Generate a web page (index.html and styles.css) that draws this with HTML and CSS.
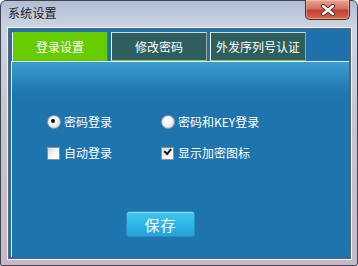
FILE: index.html
```html
<!DOCTYPE html>
<html lang="zh-CN">
<head>
  <meta charset="UTF-8">
  <title>系统设置</title>
  <link rel="stylesheet" href="styles.css">
</head>
<body>
  <div class="window">
    <!-- Barre de titre -->
    <div class="titlebar">
      <span class="title">系统设置</span>
      <button class="close" aria-label="关闭">
        <svg width="16" height="12" viewBox="0 0 16 12">
          <path d="M3 2 L13 10 M13 2 L3 10" stroke="#5a2a26" stroke-width="4.2" stroke-linecap="round"/>
          <path d="M3 2 L13 10 M13 2 L3 10" stroke="#ffffff" stroke-width="2.4" stroke-linecap="round"/>
        </svg>
      </button>
    </div>

    <div class="client">
      <div class="tabs">
        <div class="tab active">登录设置</div>
        <div class="tab">修改密码</div>
        <div class="tab">外发序列号认证</div>
      </div>

      <div class="panel">
        <div class="options">
          <label class="option"><span class="radio checked"></span>密码登录</label>
          <label class="option"><span class="radio"></span>密码和KEY登录</label>
          <label class="option"><span class="checkbox"></span>自动登录</label>
          <label class="option"><span class="checkbox checked"></span>显示加密图标</label>
        </div>
        <div class="actions">
          <button class="btn-save">保存</button>
        </div>
      </div>
    </div>
  </div>
</body>
</html>
```

FILE: styles.css
```css
* {
  margin: 0;
  padding: 0;
  box-sizing: border-box;
}

body {
  font-family: "Noto Sans CJK SC", "Liberation Sans", sans-serif;
  font-size: 12px;
  background: #ffffff;
}

.window {
  width: 358px;
  height: 266px;
  border: 1px solid #3e4450;
  border-radius: 6px 6px 2px 2px;
  background: linear-gradient(180deg, #b0bed4 0, #ccd4e2 26px, #c7c3d0 120px, #c6b8ca 100%);
  display: flex;
  flex-direction: column;
}

.titlebar {
  height: 27px;
  display: flex;
  align-items: flex-start;
  padding: 0 7px 0 7px;
}

.title {
  color: #1b1b1b;
  line-height: 24px;
  letter-spacing: 0.2px;
}

.close {
  margin-left: auto;
  margin-top: -1px;
  width: 45px;
  height: 20px;
  border: 1px solid #5b2620;
  border-top: none;
  border-radius: 0 0 5px 5px;
  background: linear-gradient(180deg, #e9a394 0, #d5705f 45%, #c2412f 55%, #d46a48 100%);
  box-shadow: inset 0 0 0 1px rgba(255, 220, 210, 0.45);
  display: flex;
  align-items: center;
  justify-content: center;
}

.client {
  flex: 1;
  margin: 0 6px 6px 7px;
  border: 1px solid #5f6674;
  box-shadow: 0 0 0 1px #eef0f5;
  background: #1d72ab;
  padding: 3px 1px 1px 2px;
  display: flex;
  flex-direction: column;
}

.tabs {
  display: flex;
  gap: 3px;
  padding-left: 1px;
}

.tab {
  width: 96px;
  height: 29px;
  background: #2e5f5d;
  color: #ffffff;
  border-left: 1px solid #ffffff;
  border-top: 1px solid #d4d8dc;
  border-right: 1px solid #9aa4a4;
  border-bottom: 1px solid #8fc24a;
  display: flex;
  align-items: center;
  justify-content: center;
  font-size: 12px;
}

.tab.active {
  background: #66cc00;
  border-top-color: #66cc00;
  border-right-color: #2a7fc0;
  border-bottom-color: #66cc00;
}

.panel {
  flex: 1;
  border-top: 1px solid #dfeef7;
  border-left: 1px solid #dfeef7;
  background: linear-gradient(180deg, #3c9ecf 0, #2179b1 28px, #1e74ad 40px, #1e74ad 100%);
  padding: 51px 0 0 35px;
}

.options {
  display: grid;
  grid-template-columns: 114px auto;
  row-gap: 15px;
}

.option {
  display: flex;
  align-items: center;
  gap: 3px;
  height: 16px;
  color: #ffffff;
  font-size: 12px;
}

.radio,
.checkbox {
  width: 14px;
  height: 12px;
  flex-shrink: 0;
  position: relative;
}

.radio::before {
  content: "";
  position: absolute;
  left: 0;
  top: 0;
  width: 12px;
  height: 12px;
  border-radius: 50%;
  border: 1px solid #8e97a2;
  background: radial-gradient(circle at 40% 35%, #ffffff 0, #f2f3f5 45%, #c9ced4 100%);
}

.radio.checked::after {
  content: "";
  position: absolute;
  left: 4px;
  top: 4px;
  width: 4px;
  height: 4px;
  border-radius: 50%;
  background: #111111;
}

.checkbox::before {
  content: "";
  position: absolute;
  left: 0;
  top: 1px;
  width: 11px;
  height: 11px;
  border: 1px solid #8a8f96;
  background: linear-gradient(135deg, #d8dadd 0, #ffffff 70%);
}

.checkbox.checked::after {
  content: "";
  position: absolute;
  left: 3px;
  top: 3px;
  width: 5px;
  height: 3px;
  border-left: 2px solid #111111;
  border-bottom: 2px solid #111111;
  transform: rotate(-50deg);
  transform-origin: 3px 2px;
}

.actions {
  display: flex;
  margin-top: 51px;
  padding-left: 79px;
}

.btn-save {
  width: 69px;
  height: 26px;
  border: 1px solid #2a8fc4;
  border-radius: 3px;
  background: linear-gradient(180deg, #43c7f0 0, #2fb6e6 50%, #23a2d8 100%);
  box-shadow: inset 0 1px 0 rgba(255, 255, 255, 0.35);
  color: #ffffff;
  font-family: "Noto Sans CJK SC", sans-serif;
  font-size: 15px;
  letter-spacing: 1px;
  cursor: pointer;
}
```
